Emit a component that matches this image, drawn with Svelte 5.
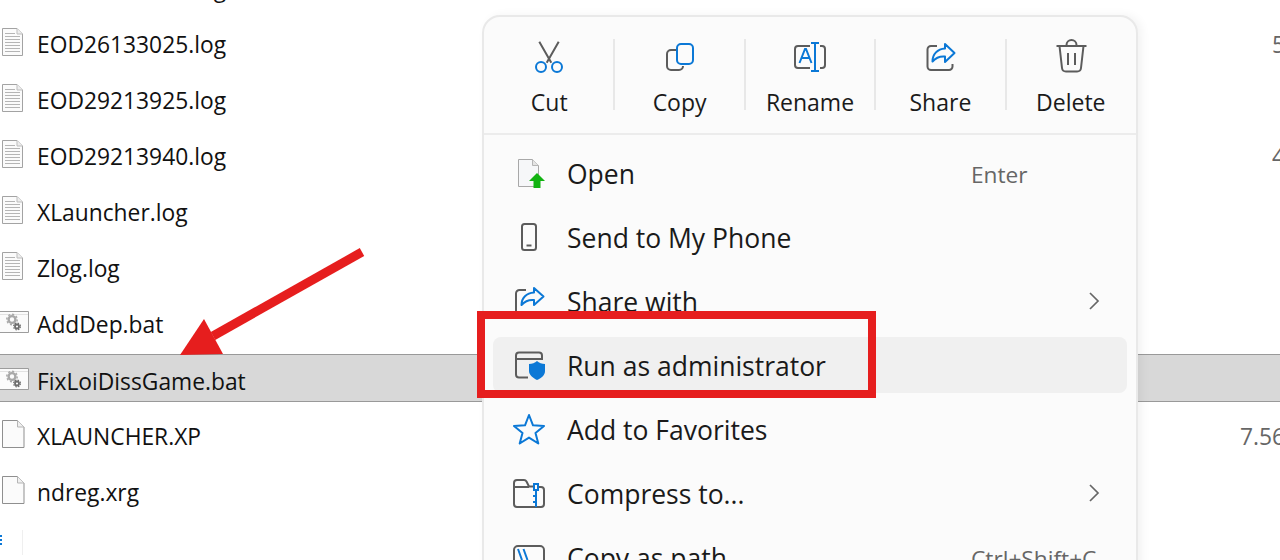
<script>
  const files = [
    { name: 'EOD26133000.log', type: 'log', size: '' },
    { name: 'EOD26133025.log', type: 'log', size: '5 KB', short: true },
    { name: 'EOD29213925.log', type: 'log', size: '' },
    { name: 'EOD29213940.log', type: 'log', size: '4 KB', short: true },
    { name: 'XLauncher.log', type: 'log', size: '' },
    { name: 'Zlog.log', type: 'log', size: '' },
    { name: 'AddDep.bat', type: 'bat', size: '' },
    { name: 'FixLoiDissGame.bat', type: 'bat', size: '', selected: true },
    { name: 'XLAUNCHER.XP', type: 'doc', size: '7.56 KB' },
    { name: 'ndreg.xrg', type: 'doc', size: '' }
  ];
  const tools = ['Cut', 'Copy', 'Rename', 'Share', 'Delete'];
  const items = [
    { label: 'Open', icon: 'open', hint: 'Enter' },
    { label: 'Send to My Phone', icon: 'phone' },
    { label: 'Share with', icon: 'share', more: true },
    { label: 'Run as administrator', icon: 'admin', active: true },
    { label: 'Add to Favorites', icon: 'star' },
    { label: 'Compress to...', icon: 'zip', more: true },
    { label: 'Copy as path', icon: 'path', hint: 'Ctrl+Shift+C' }
  ];
</script>

<div class="page">
  <div class="list">
    {#each files as f}
      <div class="row" class:selected={f.selected}>
        <span class="ficon">
          {#if f.type === 'log'}
            <svg width="24" height="30" viewBox="0 0 24 30">
              <path d="M2.500 1.500h14.500l5.500 5.500v21.500h-20z" fill="#fbfbfb" stroke="#a3a3a3" />
              <path d="M17 1.500v5.500h5.500" fill="#eee" stroke="#bdbdbd" />
              <path d="M5 6.500h10M5 9.500h15M5 12.500h15M5 15.500h15M5 18.500h15M5 21.500h15M5 24.500h15" stroke="#b5b5b5" />
            </svg>
          {:else if f.type === 'bat'}
            <svg width="30" height="24" viewBox="0 0 30 24">
              <path d="M0 1.500h28.500v21H0" fill="#fbfbfb" stroke="#9d9d9d" />
              <path d="M0 4.500h28" stroke="#e2e2e2" />
              <circle cx="12" cy="9.500" r="3.400" fill="none" stroke="#a8a8a8" stroke-width="2.400" />
              <circle cx="12" cy="9.500" r="5.200" fill="none" stroke="#a8a8a8" stroke-width="1.500" stroke-dasharray="2 2" />
              <circle cx="17" cy="16.500" r="2" fill="none" stroke="#6e6e6e" stroke-width="1.800" />
              <circle cx="17" cy="16.500" r="3.400" fill="none" stroke="#6e6e6e" stroke-width="1.200" stroke-dasharray="1.500 1.200" />
            </svg>
          {:else}
            <svg width="26" height="30" viewBox="0 0 26 30">
              <path d="M2.500 1.500h15l6.500 6.500v20.500h-21.500z" fill="#fbfbfb" stroke="#8f8f8f" />
              <path d="M17.500 1.500v6.500h6.500" fill="#f0f0f0" stroke="#b5b5b5" />
            </svg>
          {/if}
        </span>
        <span class="fname">{f.name}</span>
        <span class="fsize" class:short={f.short}>{f.size}</span>
      </div>
    {/each}
    <div class="tail">
      <svg width="24" height="34" viewBox="0 0 24 34">
        <path d="M0 13h2M0 17h2M0 21h2" stroke="#0b78d6" stroke-width="2" />
        <path d="M22.500 7v25" stroke="#efefef" stroke-width="1" />
      </svg>
    </div>
  </div>

  <div class="menu">
    <div class="toolbar">
      {#each tools as t, i}
        <div class="tool" class:sep={i < 4}>
          <svg width="40" height="40" viewBox="0 0 40 40" fill="none" stroke-width="2">
            {#if t === 'Cut'}
              <path d="M10.300 4.700l12 21M29.700 4.700l-12 21" stroke="#5c5c5c" />
              <circle cx="12" cy="30" r="5" stroke="#0b78d6" />
              <circle cx="28" cy="30" r="5" stroke="#0b78d6" />
            {:else if t === 'Copy'}
              <path d="M16 13h-5a4 4 0 0 0-4 4v12a4 4 0 0 0 4 4h8a4 4 0 0 0 4-4" stroke="#5c5c5c" />
              <rect x="17" y="7" width="16" height="20" rx="4" stroke="#0b78d6" />
            {:else if t === 'Rename'}
              <path d="M20 9H8a3 3 0 0 0-3 3v16a3 3 0 0 0 3 3h12M30 9h2a3 3 0 0 1 3 3v16a3 3 0 0 1-3 3h-2" stroke="#5c5c5c" />
              <path d="M9.500 26l5.500-14h1l5.500 14M11.500 21h8" stroke="#0b78d6" />
              <path d="M21 6h8M25 6v28M21 34h8" stroke="#0b78d6" />
            {:else if t === 'Share'}
              <path d="M17 9h-6a3.500 3.500 0 0 0-3.500 3.500v17a3.500 3.500 0 0 0 3.500 3.500h18a3.500 3.500 0 0 0 3.500-3.500V27" stroke="#5c5c5c" />
              <path d="M25 7l9.500 9-9.500 9v-5.500c-5-.5-9 1-12.500 5 0-7.500 5-12.500 12.500-13z" stroke="#0b78d6" stroke-linejoin="round" />
            {:else}
              <path d="M5.500 9h30" stroke="#5c5c5c" />
              <path d="M15.500 8.500V8a5 5 0 0 1 10 0v.5" stroke="#5c5c5c" />
              <path d="M8.500 9l2.500 22a4 4 0 0 0 4 3.500h11a4 4 0 0 0 4-3.500l2.500-22M17 16v12M24 16v12" stroke="#5c5c5c" />
            {/if}
          </svg>
          <span class="tlabel">{t}</span>
        </div>
      {/each}
    </div>
    <div class="items">
      {#each items as it}
        <div class="item" class:active={it.active}>
          <span class="micon">
            <svg width="32" height="32" viewBox="0 0 32 32" fill="none" stroke-width="2">
              {#if it.icon === 'open'}
                <path d="M5.500 2.500h14l6 6v21h-20z" fill="#f6f7f9" stroke="#a8a8a8" stroke-width="1" />
                <path d="M19.500 2.500v6h6" fill="#e4e4e4" stroke="#b5b5b5" stroke-width="1" />
                <path d="M24 16l8 8h-4.500v7h-7v-7H16z" fill="#12b312" />
              {:else if it.icon === 'phone'}
                <rect x="9" y="3" width="14" height="26" rx="2.500" stroke="#5c5c5c" />
                <path d="M13.500 24.500h5" stroke="#5c5c5c" />
              {:else if it.icon === 'share'}
                <path d="M13 5H6.500A3.500 3.500 0 0 0 3 8.500V31" stroke="#5c5c5c" />
                <path d="M21 3l9.500 8.500-9.500 8.500v-5c-5-.5-9 1-12.500 5 0-7 5-12 12.500-12.500z" stroke="#0b78d6" stroke-linejoin="round" />
              {:else if it.icon === 'admin'}
                <path d="M29 11V6.500a3 3 0 0 0-3-3H6a3 3 0 0 0-3 3v19a3 3 0 0 0 3 3h9M3 10h26" stroke="#5c5c5c" />
                <path d="M24 12c2 2 5 3 8 3v7c0 4-3 7-8 9-4-2-8-5-8-9v-7c3 0 6-1 8-3z" fill="#0b78d6" />
              {:else if it.icon === 'star'}
                <path d="M16 2l4 10.300 11 .6-8.500 7 2.800 10.600-9.300-5.900-9.300 5.900 2.800-10.600-8.500-7 11-.6z" stroke="#0b78d6" stroke-linejoin="round" />
              {:else if it.icon === 'zip'}
                <path d="M26 10h2a3 3 0 0 1 3 3v14a3 3 0 0 1-3 3H4a3 3 0 0 1-3-3V6a3 3 0 0 1 3-3h7a3 3 0 0 1 2.500 1.500L16 9.500h5" stroke="#5c5c5c" />
                <path d="M1.500 10H16" stroke="#5c5c5c" />
                <rect x="21" y="7" width="4" height="6" stroke="#0b78d6" />
                <path d="M23 13v17M20 19h3M20 25h3" stroke="#0b78d6" />
              {:else}
                <rect x="1" y="5" width="30" height="28" rx="4" stroke="#5c5c5c" />
                <path d="M5 8l4 11M10.500 8l4 11" stroke="#0b78d6" />
              {/if}
            </svg>
          </span>
          <span class="mlabel">{it.label}</span>
          {#if it.hint}<span class="hint">{it.hint}</span>{/if}
          {#if it.more}
            <svg class="chev" width="12" height="20" viewBox="0 0 12 20" fill="none"><path d="M2 2l8 8-8 8" stroke="#666" stroke-width="1.700" /></svg>
          {/if}
        </div>
      {/each}
    </div>
  </div>

  <div class="redbox"></div>
  <svg class="arrow" width="400" height="400" viewBox="0 0 400 400">
    <path d="M362 252L213 336" stroke="#e61e1e" stroke-width="9" />
    <path d="M180 355L204 319L223 354z" fill="#e61e1e" />
  </svg>
</div>

<style>
  :global(body) { margin: 0; background: #fff; }
  .page {
    position: relative;
    width: 1280px;
    height: 560px;
    overflow: hidden;
    font-family: "Open Sans", "Noto Sans", sans-serif;
    color: #111;
    background: #fff;
  }
  .list { margin-top: -40px; }
  .row {
    display: flex;
    align-items: center;
    height: 56px;
    box-sizing: border-box;
    font-size: 22.800px;
    white-space: nowrap;
  }
  .row.selected {
    height: 48px;
    margin: 2px 0 6px;
    padding-top: 5px;
    background: #d8d8d8;
    border-top: 1px solid #999;
    border-bottom: 1px solid #999;
  }
  .ficon { width: 37px; flex: none; display: flex; align-items: center; margin-bottom: 4px; }
  .fname { flex: 1; padding-top: 1px; }
  .fsize { color: #666; width: 40px; overflow: hidden; flex: none; padding-top: 1px; }
  .fsize.short { width: 8px; }
  .tail { height: 40px; display: flex; align-items: center; }
  .menu {
    position: absolute;
    left: 482px;
    top: 15px;
    width: 656px;
    height: 600px;
    box-sizing: border-box;
    background: #fbfbfb;
    border: 2px solid #e9e9e9;
    border-radius: 18px;
    box-shadow: 4px 0 10px rgba(0, 0, 0, .05);
  }
  .toolbar {
    display: grid;
    grid-template-columns: repeat(5, 1fr);
    height: 118px;
    padding-top: 22px;
    box-sizing: border-box;
    border-bottom: 2px solid #ececec;
  }
  .tool {
    display: flex;
    flex-direction: column;
    align-items: center;
    height: 71px;
  }
  .tool svg { margin-top: -2px; flex: none; }
  .tool.sep { border-right: 2px solid #e8e8e8; margin-right: -1px; padding-left: 1px; }
  .tlabel { font-size: 23px; line-height: 30px; color: #1a1a1a; margin-top: 10px; flex: none; }
  .items { padding: 10px 9px 0 9px; }
  .item {
    display: flex;
    align-items: center;
    height: 56px;
    margin-bottom: 8px;
    border-radius: 8px;
    font-size: 26.500px;
    color: #1a1a1a;
    white-space: nowrap;
  }
  .item.active { background: #f0f0f0; }
  .micon { width: 74px; flex: none; padding-left: 20px; box-sizing: border-box; display: flex; }
  .mlabel { flex: 1; padding-top: 2px; }
  .hint { color: #666; font-size: 22.700px; width: 156px; flex: none; padding-top: 2px; }
  .chev { margin-right: 27px; }
  .redbox {
    position: absolute;
    left: 477px;
    top: 311px;
    width: 383px;
    height: 71px;
    border: 8px solid #e61e1e;
  }
  .arrow { position: absolute; left: 0; top: 0; pointer-events: none; }
</style>
